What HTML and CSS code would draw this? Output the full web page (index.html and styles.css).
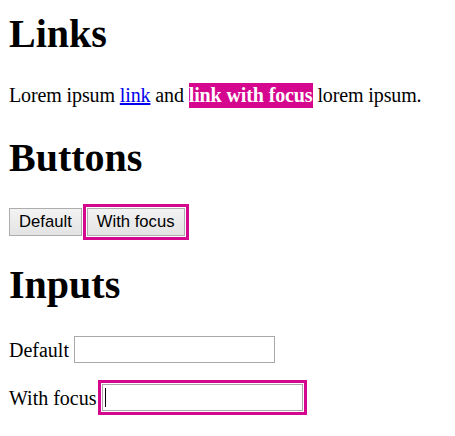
FILE: index.html
```html
<!DOCTYPE html>
<html>
<head>
<meta charset="utf-8">
<link rel="stylesheet" href="styles.css">
</head>
<body>
<h1 class="title title-first">Links</h1>
<p class="text">Lorem ipsum <a class="link" href="#">link</a> and <a class="link link-focus" href="#">link with focus</a> lorem ipsum.</p>
<h1 class="title title-buttons">Buttons</h1>
<div class="row">
  <button class="btn">Default</button>
  <button class="btn btn-focus">With focus</button>
</div>
<h1 class="title title-inputs">Inputs</h1>
<div class="field field-first"><label class="label">Default</label><input class="input" type="text"></div>
<div class="field field-second"><label class="label">With focus</label><span class="input-wrap"><input class="input input-focus" type="text"><span class="caret"></span></span></div>
</body>
</html>
```
FILE: styles.css
```css
html, body {
  background: #fff;
}
body {
  margin: 0;
  padding: 11px 9px 20px 9px;
  font-family: "Liberation Serif", "Times New Roman", serif;
  font-size: 20px;
  color: #000;
}
.title {
  font-size: 40px;
  font-weight: bold;
  line-height: 46px;
  margin: 0;
}
.title-buttons {
  margin-top: 28px;
}
.title-inputs {
  margin-top: 26px;
}
.text {
  margin: 26px 0 0 0;
  line-height: 24px;
  letter-spacing: -0.12px;
}
.link {
  color: #0000ee;
  text-decoration: underline;
}
.link-focus {
  background: #d5078f;
  color: #fff;
  font-weight: bold;
  text-decoration: none;
  padding: 1px 0 2px 0;
}
.row {
  margin-top: 27px;
  display: flex;
  align-items: center;
  gap: 5px;
}
.btn {
  font-family: "Liberation Sans", Arial, sans-serif;
  font-size: 16.67px;
  color: #000;
  background: linear-gradient(#f3f3f3, #e3e3e3);
  border: 1px solid #adadad;
  border-radius: 0;
  padding: 3px 9px;
  line-height: 20px;
  margin: 0;
}
.btn-focus {
  outline: 3px solid #d5078f;
  outline-offset: 1px;
}
.field {
  display: flex;
  align-items: center;
  gap: 5px;
  line-height: 24px;
}
.field-first {
  margin-top: 28px;
}
.field-second {
  margin-top: 21px;
}
.input-wrap {
  position: relative;
  display: flex;
}
.input {
  width: 201px;
  height: 27px;
  box-sizing: border-box;
  border: 1px solid #a9a9a9;
  border-radius: 0;
  padding: 1px 2px;
  margin: 0;
  font-size: 16px;
  background: #fff;
}
.input-focus {
  outline: 3px solid #d5078f;
  outline-offset: 1px;
}
.caret {
  position: absolute;
  left: 3px;
  top: 4px;
  width: 1px;
  height: 19px;
  background: #000;
}
```
